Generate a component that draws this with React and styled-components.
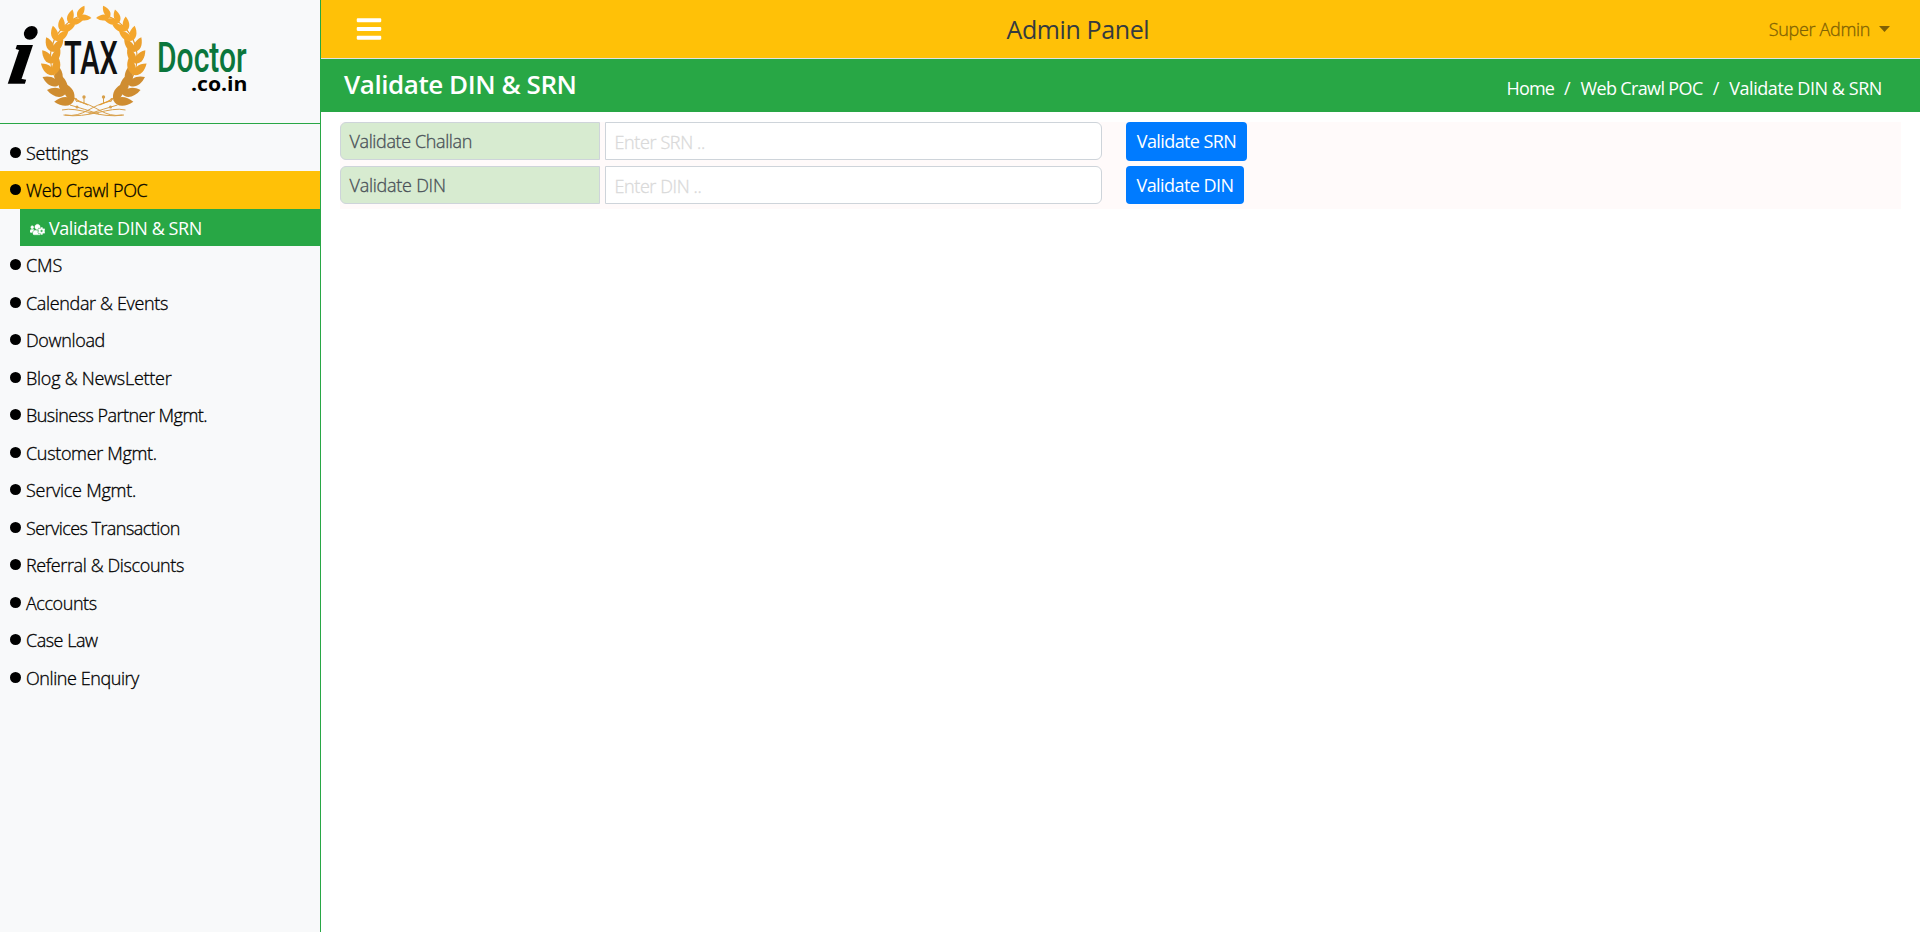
import React from 'react';
import styled, { createGlobalStyle } from 'styled-components';
import { FaBars, FaUsersCog } from 'react-icons/fa';

const Global = createGlobalStyle`
  * { box-sizing: border-box; }
  body { margin: 0; background: #fff; font-family: 'Open Sans', 'Noto Sans', sans-serif; font-size: 18px; line-height: 27px; color: #212529; }
`;
const Page = styled.div`display: flex; height: 932px; overflow: hidden;`;
const Sidebar = styled.aside`width: 321px; background: #f8f9fa; border-right: 1px solid #28a745;`;
const Brand = styled.div`height: 124px; border-bottom: 1px solid #28a745;`;
const LogoArt = styled.svg`display: block; overflow: visible;`;
const Menu = styled.nav`padding-top: 9.5px; display: flex; flex-direction: column;`;
const Item = styled.a`
  height: 37.5px; display: flex; align-items: center; gap: 5px; padding: 2px 0 0 10px; color: #000;
  background: ${p => (p.$open ? '#ffc107' : 'transparent')};
`;
const Dot = styled.i`width: 11px; height: 11px; border-radius: 50%; background: #000; margin-top: -2px;`;
const SubItem = styled(Item)`
  margin-left: 20px; background: #28a745; color: #fff; gap: 4px;
  svg { margin-top: 3px; stroke: #fff; stroke-width: 16px; }
`;
const Text = styled.span`
  white-space: nowrap; font-weight: ${p => p.$w || 300}; letter-spacing: ${p => p.$ls || 0}px;
  -webkit-text-stroke: ${p => (p.$w ? 0 : 0.3)}px currentColor;
`;
const Main = styled.main`flex: 1;`;
const TopBar = styled.header`
  height: 59px; background: #ffc107; border-bottom: 1px solid #dee2e6; display: flex;
  justify-content: space-between; align-items: center; padding: 0 30px 0 34px;
`;
const User = styled.div`display: flex; align-items: center; gap: 9px; color: #806104;`;
const Caret = styled.i`width: 11px; height: 6px; background: currentColor; clip-path: polygon(0 0, 100% 0, 50% 100%);`;
const PanelName = styled.div`font-size: 25px; color: #343a40; padding-left: 4px;`;
const TitleBar = styled.div`height: 53px; background: #28a745; color: #fff; display: flex; justify-content: space-between; padding: 0 38px 0 23px;`;
const Title = styled.h1`margin: 0; font-size: 26px; line-height: 51px;`;
const Crumbs = styled.div`display: flex; gap: 10px; line-height: 59px;`;
const Form = styled.section`margin: 10px 19px 0 19px; padding-bottom: 5px; background: #fffafa; display: grid; gap: 5px;`;
const Row = styled.div`display: flex; height: ${p => p.$h}px;`;
const Label = styled.label`
  width: 260px; height: 38px; border: 1px solid #ced4da; border-radius: 6px 0 0 6px; background: #d7ebd0;
  color: #495057; padding: 5px 8.5px; margin-right: 5px;
`;
const Input = styled.div`
  width: 497px; height: 38px; border: 1px solid #ced4da; border-radius: 0 6px 6px 0; background: #fff;
  color: #d9d9d9; padding: 6px 8.5px; margin-right: 24px;
`;
const Button = styled.button`
  width: ${p => p.$width}px; border: 0; border-radius: 4px; background: #007bff; color: #fff; font: inherit; padding: 0;
`;

const menu = [
  ['Settings', -0.22], ['Web Crawl POC', -0.38], ['CMS', -0.15], ['Calendar & Events', -0.35],
  ['Download', -0.35], ['Blog & NewsLetter', -0.25], ['Business Partner Mgmt.', -0.53],
  ['Customer Mgmt.', -0.33], ['Service Mgmt.', -0.25], ['Services Transaction', -0.56],
  ['Referral & Discounts', -0.38], ['Accounts', -0.44], ['Case Law', -0.5], ['Online Enquiry', -0.43],
];

// Leaves climb the left arc from the base of the wreath to its tip.
const leaves = Array.from({ length: 10 }, (_, i) => {
  const t = i / 9;
  const a = ((119 + t * 128) * Math.PI) / 180;
  const x = 94 + 41 * Math.cos(a);
  const y = 60 + 46 * Math.sin(a);
  const heading = (Math.atan2(46 * Math.cos(a), -41 * Math.sin(a)) * 180) / Math.PI;
  return { x, y, heading, size: 20 - 6.5 * t };
});

const Branch = () => (
  <g>
    <path d="M88 105 C40 88 38 32 82 15" fill="none" stroke="#e79a2a" strokeWidth="1.1" />
    {leaves.map(({ x, y, heading, size }, i) =>
      [-36, 27].map(turn => (
        <path
          key={`${i}${turn}`}
          transform={`translate(${x} ${y}) rotate(${heading + turn}) scale(${size / 16})`}
          d="M0 0 C3 -5.5 10 -5 16 0 C10 4.5 4 4 0 0Z"
          fill={i < 3 ? '#cf8d31' : i < 6 ? '#eb9f2c' : '#f5a72d'}
        />
      ))
    )}
    <path d="M62 110 C78 106 99 119 124 115 M65 115 C84 118 90 105 111 101 M70 105 Q84 109 99 114 M77 102 Q73 97 77 99 M84 104 V98" fill="none" stroke="#d8a04b" strokeWidth="1" />
    <circle cx="84" cy="97" r="1.7" fill="#d8a04b" />
    <circle cx="77" cy="107" r="1.5" fill="#d8a04b" />
  </g>
);

const Logo = () => (
  <LogoArt width="300" height="122" viewBox="0 0 300 122">
    <Branch />
    <g transform="translate(187.5 0) scale(-1 1)"><Branch /></g>
    <text x="7" y="83" transform="translate(13 0) skewX(-9)" fontFamily="Liberation Serif" fontStyle="italic" fontWeight="700" fontSize="81" stroke="#000" strokeWidth="1.6">i</text>
    <text transform="translate(64 74) scale(.62 1)" fontFamily="Roboto" fontWeight="500" fontSize="45.5" textLength="87" lengthAdjust="spacingAndGlyphs" fill="#111">TAX</text>
    <text transform="translate(157 72) scale(.7 1)" fontFamily="Roboto" fontWeight="500" fontSize="42" textLength="128" lengthAdjust="spacingAndGlyphs" fill="#0b763c">Doctor</text>
    <text x="191" y="91" fontFamily="Open Sans" fontWeight="700" fontSize="20" textLength="56.5" lengthAdjust="spacingAndGlyphs">.co.in</text>
  </LogoArt>
);

export default function App() {
  return (
    <Page>
      <Global />
      <Sidebar>
        <Brand><Logo /></Brand>
        <Menu>
          {menu.map(([name, ls]) => (
            <React.Fragment key={name}>
              <Item $open={name === 'Web Crawl POC'}><Dot /><Text $ls={ls}>{name}</Text></Item>
              {name === 'Web Crawl POC' && <SubItem><FaUsersCog size={15} /><Text $w={400} $ls={-0.44}>Validate DIN &amp; SRN</Text></SubItem>}
            </React.Fragment>
          ))}
        </Menu>
      </Sidebar>
      <Main>
        <TopBar>
          <FaBars size={28} color="#fff" />
          <PanelName><Text $w={500} $ls={-0.39}>Admin Panel</Text></PanelName>
          <User><Text $ls={-0.33}>Super Admin</Text><Caret /></User>
        </TopBar>
        <TitleBar>
          <Title><Text $w={600} $ls={-0.44}>Validate DIN &amp; SRN</Text></Title>
          <Crumbs>
            <Text $w={400} $ls={-0.9}>Home</Text><Text $w={400}>/</Text>
            <Text $w={400} $ls={-0.64}>Web Crawl POC</Text><Text $w={400}>/</Text>
            <Text $w={400} $ls={-0.44}>Validate DIN &amp; SRN</Text>
          </Crumbs>
        </TitleBar>
        <Form>
          <Row $h={39}>
            <Label><Text $ls={-0.38}>Validate Challan</Text></Label>
            <Input><Text $ls={-0.38}>Enter SRN ..</Text></Input>
            <Button $width={121}><Text $w={400} $ls={-0.6}>Validate SRN</Text></Button>
          </Row>
          <Row $h={38}>
            <Label><Text $ls={-0.25}>Validate DIN</Text></Label>
            <Input><Text $ls={-0.4}>Enter DIN ..</Text></Input>
            <Button $width={118}><Text $w={400} $ls={-0.55}>Validate DIN</Text></Button>
          </Row>
        </Form>
      </Main>
    </Page>
  );
}
